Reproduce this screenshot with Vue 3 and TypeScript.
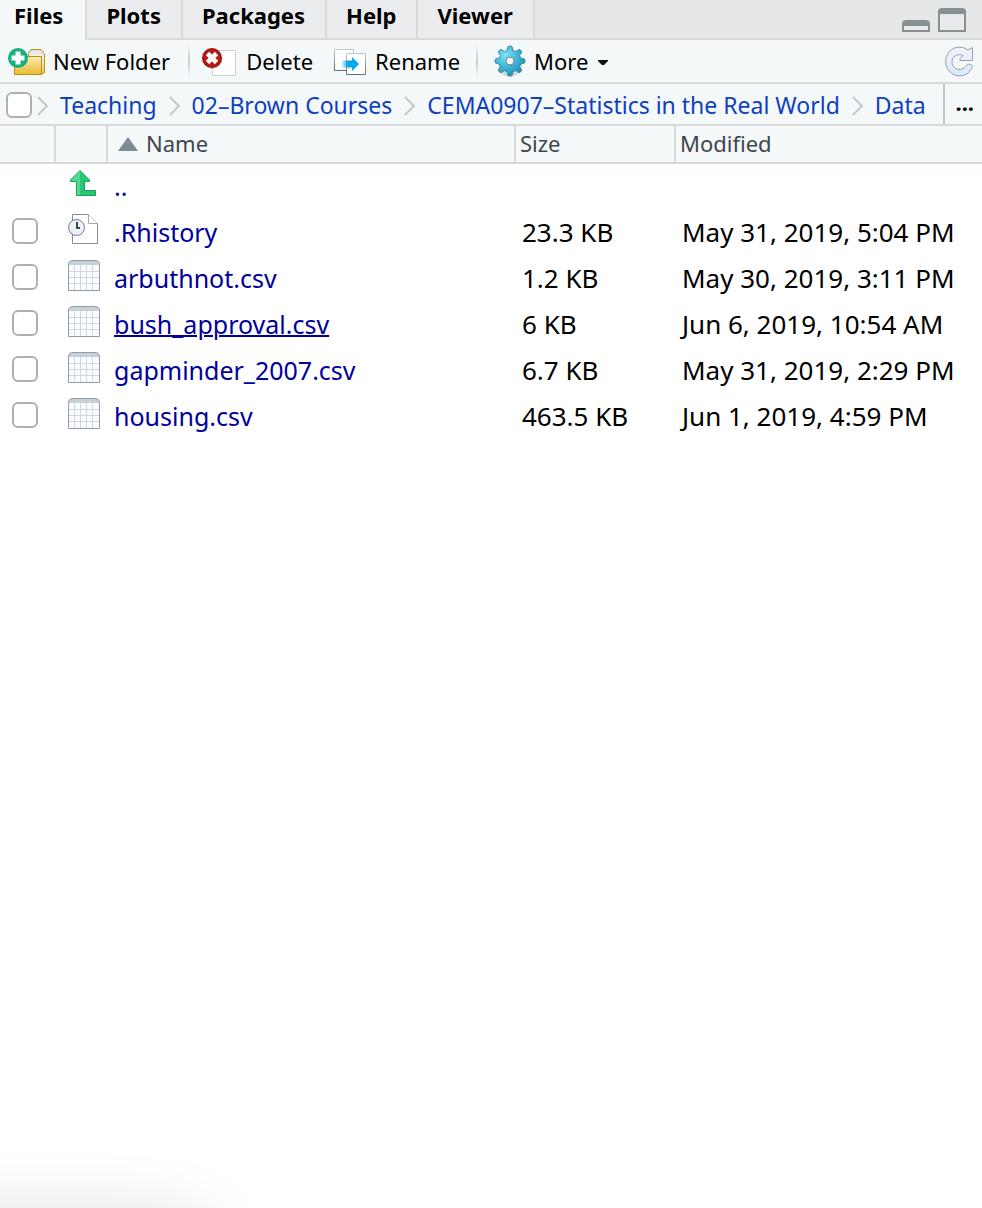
<script setup lang="ts">
import { ref } from 'vue'

interface FileRow {
  name: string
  kind: 'history' | 'csv'
  size: string
  modified: string
  active?: boolean
}

const tabs = ['Files', 'Plots', 'Packages', 'Help', 'Viewer']
const current = ref('Files')
const crumbs = ['Teaching', '02–Brown Courses', 'CEMA0907–Statistics in the Real World', 'Data']
const files: FileRow[] = [
  { name: '.Rhistory', kind: 'history', size: '23.3 KB', modified: 'May 31, 2019, 5:04 PM' },
  { name: 'arbuthnot.csv', kind: 'csv', size: '1.2 KB', modified: 'May 30, 2019, 3:11 PM' },
  { name: 'bush_approval.csv', kind: 'csv', size: '6 KB', modified: 'Jun 6, 2019, 10:54 AM', active: true },
  { name: 'gapminder_2007.csv', kind: 'csv', size: '6.7 KB', modified: 'May 31, 2019, 2:29 PM' },
  { name: 'housing.csv', kind: 'csv', size: '463.5 KB', modified: 'Jun 1, 2019, 4:59 PM' },
]
const selected = ref<string[]>([])

function toggleAll(e: Event) {
  selected.value = (e.target as HTMLInputElement).checked ? files.map((f) => f.name) : []
}
</script>

<template>
  <main class="pane">
    <header class="tabbar">
      <nav class="tabs">
        <button
          v-for="t in tabs"
          :key="t"
          type="button"
          class="tab"
          :class="{ on: t === current }"
          @click="current = t"
        >{{ t }}</button>
      </nav>
      <div class="winbtns">
        <button type="button" aria-label="Minimize">
          <svg width="28" height="24" viewBox="0 0 28 24">
            <path d="M0 24V16q0-4 4-4H24q4 0 4 4V24Z" fill="#879194" />
            <path d="M2 18H26V22H2Z" fill="#e8eaeb" />
          </svg>
        </button>
        <button type="button" aria-label="Maximize">
          <svg width="28" height="24" viewBox="0 0 28 24">
            <path d="M0 24V4q0-4 4-4H24q4 0 4 4V24Z" fill="#879194" />
            <path d="M2 6H26V22H2Z" fill="#e8eaeb" />
          </svg>
        </button>
      </div>
    </header>

    <div class="toolbar">
      <button type="button" class="tool new">
        <svg width="38" height="30" viewBox="0 0 38 30">
          <defs>
            <linearGradient id="fold" x1="0" y1="0" x2="0" y2="1">
              <stop offset="0" stop-color="#f8eeb0" /><stop offset="1" stop-color="#efb933" />
            </linearGradient>
            <linearGradient id="foldback" x1="0" y1="0" x2="0" y2="1">
              <stop offset="0" stop-color="#e4e4e4" /><stop offset=".35" stop-color="#f4f2e8" /><stop offset="1" stop-color="#f0c75a" />
            </linearGradient>
          </defs>
          <path d="M20.500 9.500V6.500L23 2.500H33L36.500 7.500V25.500L34 27H20Z" fill="url(#foldback)" stroke="#bb900e" />
          <path d="M6.500 9.500H33.500V27.500H6.500Z" fill="url(#fold)" stroke="#bb900e" />
          <circle cx="10" cy="11" r="10" fill="#15b07f" />
          <path d="M7.500 4.500h5v4h4v5h-4v4h-5v-4h-4v-5h4Z" fill="#fff" />
        </svg>
        <span>New Folder</span>
      </button>
      <i class="sep"></i>
      <button type="button" class="tool del">
        <svg width="36" height="30" viewBox="0 0 36 30">
          <defs>
            <radialGradient id="red"><stop offset="0" stop-color="#c51a10" /><stop offset=".75" stop-color="#b91d13" /><stop offset="1" stop-color="#91100a" /></radialGradient>
          </defs>
          <path d="M10.500 3.500H33.500V28.500H10.500Z" fill="#fff" stroke="#c7d2da" />
          <circle cx="10.500" cy="12" r="10" fill="#000" opacity=".2" />
          <circle cx="10" cy="11" r="10" fill="url(#red)" />
          <path d="M5.500 6.500l9 9M14.500 6.500l-9 9" stroke="#fff" stroke-width="4.600" />
        </svg>
        <span>Delete</span>
      </button>
      <button type="button" class="tool ren">
        <svg width="34" height="28" viewBox="0 0 34 28">
          <defs>
            <linearGradient id="box" x1="0" y1="0" x2="0" y2="1"><stop offset="0" stop-color="#c2c9ce" /><stop offset="1" stop-color="#5f6f79" /></linearGradient>
            <linearGradient id="arr"><stop offset="0" stop-color="#00a8ec" stop-opacity="0" /><stop offset=".4" stop-color="#00a8ec" /></linearGradient>
          </defs>
          <path d="M1.500 1.500H20.500V22.500H1.500Z" fill="#fff" stroke="url(#box)" />
          <path d="M13.500 5.500H32.500V26.500H13.500Z" fill="#fff" stroke="url(#box)" />
          <path d="M8 12.500H19V9L26 16L19 23V19.500H8Z" fill="url(#arr)" />
        </svg>
        <span>Rename</span>
      </button>
      <i class="sep"></i>
      <button type="button" class="tool more">
        <svg width="32" height="34" viewBox="0 0 32 34">
          <defs>
            <radialGradient id="gear" cx=".35" cy=".3" r=".75"><stop offset="0" stop-color="#7fe0f4" /><stop offset=".5" stop-color="#45b8d8" /><stop offset="1" stop-color="#1f8fb6" /></radialGradient>
          </defs>
          <ellipse cx="16" cy="19" rx="12" ry="13" fill="#000" opacity=".13" />
          <path d="M13 5.500L14 1.500Q16 .4 18 1.500L19 5.500Q20.500 5.800 21.500 6.600L25 4.500Q27.400 5 27.700 7.300L25.500 10.500Q26.300 11.800 26.600 13L30.500 14Q31.600 16 30.500 18L26.600 19Q26.300 20.400 25.500 21.500L27.700 25Q27.200 27.300 25 27.700L21.500 25.500Q20.300 26.300 19 26.600L18 30.500Q16 31.600 14 30.500L13 26.600Q11.600 26.300 10.500 25.500L7 27.700Q4.700 27.200 4.300 25L6.500 21.500Q5.700 20.300 5.400 19L1.500 18Q.4 16 1.500 14L5.400 13Q5.700 11.700 6.500 10.500L4.300 7.300Q4.800 4.800 7 4.500L10.500 6.600Q11.700 5.800 13 5.500Z" fill="url(#gear)" stroke="#338ca8" />
          <circle cx="16" cy="16" r="4" fill="#f4f8f9" stroke="#68858e" />
        </svg>
        <span>More</span>
        <svg class="caret" width="10" height="5" viewBox="0 0 10 5"><path d="M0 0H10V1L6 5H4L0 1Z" fill="#111" /></svg>
      </button>
      <button type="button" class="refresh" aria-label="Refresh">
        <svg width="30" height="32" viewBox="0 0 30 32">
          <defs><linearGradient id="rf" x1="0" y1="0" x2="0" y2="1"><stop offset="0" stop-color="#f1f4fa" /><stop offset="1" stop-color="#dce8fb" /></linearGradient></defs>
          <path d="M24 4L28.500 1.500V14.500H16V12.500L19 9.500A7.500 7.500 0 1 0 21.500 20.500Q24.500 16.500 28 19.500Q28.800 21 27.500 23A14 14.500 0 1 1 24 4Z" fill="url(#rf)" stroke="#98a0b0" />
        </svg>
      </button>
    </div>

    <nav class="path" aria-label="Path">
      <input type="checkbox" aria-label="Select all files" @change="toggleAll" />
      <template v-for="c in crumbs" :key="c">
        <svg class="chev" width="12" height="20" viewBox="0 0 12 20">
          <path d="M2 1L11 10L2 19" fill="none" stroke="#fff" stroke-width="2" />
          <path d="M1 1L10 10L1 19" fill="none" stroke="#c3c7cf" stroke-width="2" />
        </svg>
        <a href="#">{{ c }}</a>
      </template>
      <button type="button" class="browse" aria-label="Browse">...</button>
    </nav>

    <table class="files">
      <colgroup>
        <col class="c-check" /><col class="c-icon" /><col class="c-name" /><col class="c-size" /><col class="c-mod" />
      </colgroup>
      <thead>
        <tr>
          <th></th>
          <th></th>
          <th class="h-name">
            <svg width="20" height="14" viewBox="0 0 20 14"><path d="M10 0L20 14H0Z" fill="#808997" /></svg>
            <span>Name</span>
          </th>
          <th>Size</th>
          <th>Modified</th>
        </tr>
      </thead>
      <tbody>
        <tr>
          <td></td>
          <td class="icon">
            <svg width="28" height="32" viewBox="0 0 28 32">
              <defs><linearGradient id="up"><stop offset=".36" stop-color="#4edb91" /><stop offset=".38" stop-color="#27c775" /></linearGradient></defs>
              <path d="M12 2.500L21.500 12V13.500H16.500V22.500H27.500V27.500H8.500V13.500H2.500V12Z" fill="url(#up)" stroke="#1b9f5a" />
            </svg>
          </td>
          <td class="name"><a href="#">..</a></td>
          <td></td>
          <td></td>
        </tr>
        <tr v-for="f in files" :key="f.name">
          <td class="check"><input v-model="selected" type="checkbox" :value="f.name" :aria-label="f.name" /></td>
          <td class="icon">
            <svg v-if="f.kind === 'history'" width="32" height="32" viewBox="0 0 32 32">
              <path d="M4.500 .5H20.500L29.500 9.500V29.500H4.500Z" fill="#fff" stroke="#8c8c8c" />
              <path d="M20.500 .5V9.500H29.500" fill="#fff" stroke="#a8a8a8" />
              <circle cx="8.500" cy="13.500" r="8" fill="#e9f0f8" stroke="#6f7b88" />
              <path d="M9 8V14H12" fill="none" stroke="#111" stroke-width="1.500" />
            </svg>
            <svg v-else width="32" height="32" viewBox="0 0 32 32">
              <path d="M.5 30.500V5Q.5 .5 5 .5H27Q31.500 .5 31.500 5V30.500Z" fill="#fafcff" />
              <path d="M.5 5Q.5 .5 5 .5H27Q31.500 .5 31.500 5Z" fill="#c7d0d9" />
              <path d="M6.500 5V30M12.500 5V30M18.500 5V30M24.500 5V30M1 11.500H31M1 17.500H31M1 23.500H31" stroke="#cfd7e1" />
              <path d="M.5 30.500V5Q.5 .5 5 .5H27Q31.500 .5 31.500 5V30.500Z" fill="none" stroke="#8f9ca8" />
            </svg>
          </td>
          <td class="name"><a href="#" :class="{ active: f.active }">{{ f.name }}</a></td>
          <td class="val">{{ f.size }}</td>
          <td class="val">{{ f.modified }}</td>
        </tr>
      </tbody>
    </table>
    <div class="glow"></div>
  </main>
</template>

<style>
body {
  margin: 0;
  background: #fff;
}
</style>

<style scoped>
.pane {
  position: relative;
  min-height: 100vh;
  overflow: hidden;
  background: #fff;
  color: #000;
  font-family: 'Noto Sans', 'Open Sans', sans-serif;
  font-size: 22px;
  line-height: 30px;
}
button {
  margin: 0;
  padding: 0;
  border: 0;
  background: none;
  color: inherit;
  font: inherit;
}
svg {
  display: block;
  flex: none;
}
a {
  color: inherit;
  text-decoration: none;
}
.tabbar {
  display: flex;
  justify-content: space-between;
  height: 40px;
  background: linear-gradient(#d6dadc, #d6dadc) bottom / 100% 2px no-repeat #e6e7e9;
}
.tabs {
  display: flex;
}
.tab {
  box-sizing: border-box;
  height: 38px;
  padding: 0 20px 8px 19px;
  border-right: 2px solid #d6dadc;
  background: #ebecee;
  font-weight: 700;
}
.tab:first-child {
  padding-right: 22px;
  padding-left: 14px;
}
.tab.on {
  height: 40px;
  padding-bottom: 10px;
  background: #f4f8f9;
}
.winbtns {
  display: flex;
  gap: 8px;
  padding: 8px 16px 0 0;
}
.winbtns button {
  height: 24px;
}
.toolbar {
  display: flex;
  align-items: center;
  height: 42px;
  padding: 0 8px;
  border-bottom: 2px solid #d6dadc;
  background: #f4f8f9;
}
.toolbar svg {
  margin-top: 2px;
}
.tool {
  display: flex;
  align-items: center;
  gap: 8px;
  white-space: nowrap;
}
.new {
  gap: 7px;
}
.del {
  margin-right: 20px;
}
.caret {
  margin-left: 2px;
}
.sep {
  width: 2px;
  height: 34px;
  margin: 0 12px 0 18px;
  background: linear-gradient(#f4f8f9, #c9ccd0 50%, #f4f8f9);
}
.ren + .sep {
  margin: 0 16px;
}
.refresh {
  margin-left: auto;
}
.path {
  display: flex;
  align-items: center;
  height: 40px;
  padding-left: 6px;
  border-bottom: 2px solid #d6dadc;
  background: #f4f8f9;
  color: #0e3fbe;
  font-size: 23px;
  white-space: nowrap;
}
.chev {
  margin: 4px 11px 0 0;
}
.path a {
  margin: 2px 12px 0 0;
}
.browse {
  align-self: stretch;
  margin-left: auto;
  padding: 0 8px 4px 10px;
  border-left: 2px solid #c3c7cf;
  color: #000;
  font-size: 22px;
  font-weight: 700;
}
input[type='checkbox'] {
  appearance: none;
  box-sizing: border-box;
  display: block;
  flex: none;
  width: 26px;
  height: 26px;
  margin: 0;
  border: 2px solid #b0b0b0;
  border-radius: 6px;
  background: #fff;
}
.path input[type='checkbox'] {
  margin: 2px 5px 0 0;
}
input[type='checkbox']:checked {
  background: #3b82e0;
}
.files {
  width: 100%;
  table-layout: fixed;
  border-collapse: separate;
  border-spacing: 0;
}
.c-check {
  width: 56px;
}
.c-icon {
  width: 52px;
}
.c-name {
  width: auto;
}
.c-size {
  width: 160px;
}
.c-mod {
  width: 306px;
}
th {
  box-sizing: border-box;
  height: 38px;
  padding: 0 4px 2px;
  border-right: 2px solid #d6dadc;
  border-bottom: 2px solid #d6dadc;
  background: #f4f8f9;
  color: #3f464c;
  font-weight: 400;
  text-align: left;
}
th:last-child {
  border-right: 0;
}
.h-name svg {
  display: inline-block;
  margin: 0 8px 1px 6px;
}
td {
  box-sizing: border-box;
  height: 46px;
  padding: 0 6px 2px;
  white-space: nowrap;
}
.check {
  padding: 0 0 4px 12px;
}
.icon {
  padding: 0 0 6px 12px;
}
.name {
  color: #00009c;
  font-size: 25px;
}
.val {
  font-size: 26px;
}
.active {
  text-decoration: underline;
  text-decoration-thickness: 2px;
}
.glow {
  position: absolute;
  bottom: -122px;
  left: -100px;
  width: 294px;
  height: 100px;
  box-shadow: 0 0 76px rgba(0, 0, 0, 0.22);
}
</style>
